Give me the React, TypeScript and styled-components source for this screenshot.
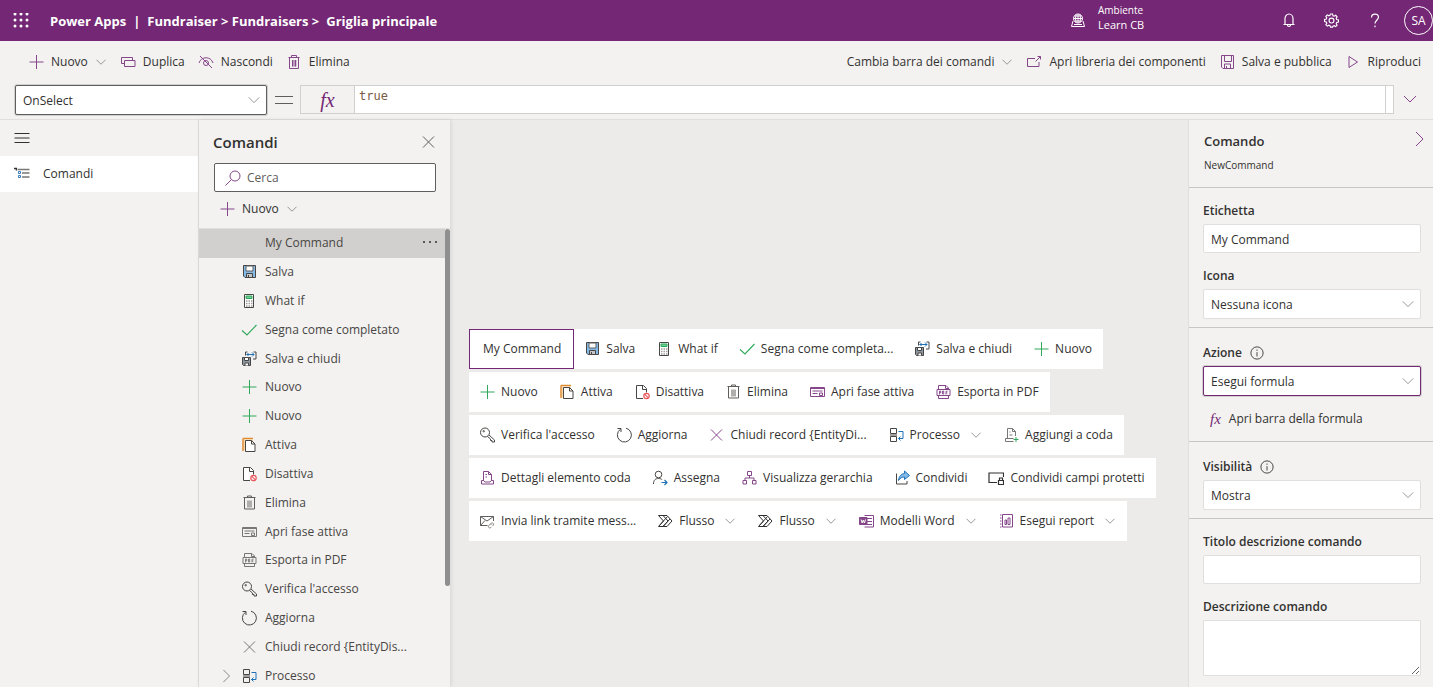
import React from "react";
import styled, { createGlobalStyle, css } from "styled-components";

const purple = "#742774";
const iconPurple = "#85478a";
const ink = "#323130";
const line = "#c8c6c4";
const font = '"Open Sans", "Noto Sans", sans-serif';

const Global = createGlobalStyle`
  *, *::before, *::after { box-sizing: border-box; }
  body { margin: 0; font-family: ${font}; font-size: 12px; line-height: 20px; color: ${ink}; background: #f3f2f1; }
  button, input, select, textarea { font: inherit; color: inherit; margin: 0; }
  svg { display: block; flex: none; }
`;

/* ---------- icons ---------- */

const Svg = ({ size = 16, children, ...rest }: React.SVGProps<SVGSVGElement> & { size?: number }) => (
  <svg width={size} height={size} viewBox="0 0 16 16" fill="none" stroke="currentColor" strokeWidth="1" aria-hidden="true" {...rest}>
    {children}
  </svg>
);

const icons = {
  plus: <path d="M8.500 1v14M1.500 8h14" />,
  plusGreen: <path d="M8.500 1v14M1.500 8h14" stroke="#2fa85a" />,
  duplicate: <path d="M4.500 9.500H1.500v-6h11v3M4.500 6.500h10.500v6H4.500z" />,
  hide: (
    <>
      <path d="M1 9c2-7 12-7 14 0" />
      <circle cx="8" cy="9" r="2.500" />
      <path d="M2 2l12 12" />
    </>
  ),
  trash: (
    <>
      <path d="M6 6h4.500v6.500H6z" fill="currentColor" stroke="none" opacity="0.5" />
      <path d="M2.500 3.500h11M5.500 3.500v-2h5v2M3.500 3.500v11h9v-11M6.500 6v6.500M9.500 6v6.500" />
    </>
  ),
  library: <path d="M9 4.500H1.500v8h11.500V8M9.500 7.500l5-5M11.500 2.500h3V5.500" />,
  savePlain: <path d="M2.500 1.500h12v13H4l-1.500-1.500zM5.500 1.500v6h7v-6M5.500 14.500v-4.500h6v4.500M7.500 12v2.500" />,
  play: <path d="M4 2.500l8.500 5.500L4 13.500z" />,
  chevDown: <path d="M2 5L8 11 14 5" />,
  chevRight: <path d="M5 1l7 7-7 7" />,
  menu: <path d="M0.500 3.500h15M0.500 8h15M0.500 12.500h15" />,
  tree: (
    <>
      <path d="M0 2.500h3M2.500 2.500v2" strokeWidth="1.500" />
      <path d="M4 3.500h11.500M8 7h7.500M8 11h7.500" stroke="#797775" strokeWidth="1.300" />
      <path d="M4.500 5.500h2v2h-2zM4.500 9.500h2v2h-2z" stroke="#3a7fc0" />
    </>
  ),
  close: <path d="M3 2.500l11 11M14 2.500l-11 11" />,
  search: (
    <>
      <circle cx="10" cy="6" r="5" />
      <path d="M6.500 9.500L0.500 15.500" />
    </>
  ),
  save: (
    <>
      <path d="M2.500 1.500h12v12H4l-1.500-1.500z" fill="#83bae8" stroke="#484644" />
      <path d="M5 2h7v5H5z" fill="#fff" stroke="#605e5c" />
      <path d="M5.500 9.500h6v4h-6z" fill="#c8c6c4" stroke="#484644" />
      <path d="M7.500 11v2.500" stroke="#484644" />
    </>
  ),
  calc: (
    <>
      <path d="M3.500 1.500h9v13h-9z" fill="#fff" stroke="#484644" />
      <path d="M5 3h6v2.500H5z" fill="#6fce96" stroke="#2fa85a" />
      <path d="M5 8h6.500M5 10.500h6.500M5 13h6.500" stroke="#a19f9d" strokeWidth="1.500" strokeDasharray="1.500 1" />
    </>
  ),
  check: <path d="M1 8.500l5 4.500L15.500 3" stroke="#2fa85a" strokeWidth="1.100" />,
  saveClose: (
    <>
      <path d="M1.500 6.500h8v8h-7l-1-1z" fill="#8d97a0" stroke="#484644" />
      <path d="M3.500 6.500h4v3h-4z" fill="#fff" stroke="#484644" />
      <path d="M4 14.500v-2.500h3.500v2.500" fill="#fff" stroke="#484644" />
      <path d="M4.500 4.500V1h2M12.500 1h2.500v7h-3" stroke="#484644" />
      <path d="M5.500 3.500h7.500M7.500 2l-1.500 1.500L7.500 5M11 1.500l2 2-2 2" stroke="#1f72b8" />
    </>
  ),
  activate: (
    <>
      <path d="M2 1.500h10M2 1.500v12.500" stroke="#e08a2e" strokeWidth="1.500" />
      <path d="M3 2.500h9V4H5v9.500H3z" fill="#fbd9a8" stroke="none" />
      <path d="M4.500 3.500h6l3.500 3.500v7.500H4.500z" fill="#fff" stroke="#484644" />
      <path d="M10.500 3.500V7H14" stroke="#484644" />
    </>
  ),
  deactivate: (
    <>
      <path d="M9 14.500H2.500v-13h7l3 3v4" fill="#fff" stroke="#484644" />
      <path d="M8.500 1.500v4h4" stroke="#484644" />
      <circle cx="12.500" cy="12" r="2.700" fill="#fff" stroke="#e8575b" strokeWidth="1.200" />
      <path d="M10.700 10.200l3.600 3.600" stroke="#e8575b" strokeWidth="1.200" />
    </>
  ),
  bin: (
    <>
      <path d="M6 5.500h5v7H6z" fill="#b0aeac" stroke="none" />
      <path d="M2.500 2.500h12M6.500 2.500v-1.500h4v1.500M3.500 2.500v11.500h10v-11.500" stroke="#605e5c" />
    </>
  ),
  stage: (
    <>
      <path d="M1.500 3.500h14v9h-14zM2 4.500h13" />
      <path d="M3.500 7h7M3.500 9.500h5M10.500 7h3M10.500 9h3v2.500h-3z" />
    </>
  ),
  pdf: (
    <>
      <path d="M3.500 5.500V1.500h7.500l2.500 2.500v1.500M10.500 1.500V4.500h3M3.500 11.500v3h10v-3M2 5.500h13v6H2z" />
      <path d="M4.500 10.500V7h1.200v2H4.500M7.500 7v3h1.200V7H7.500M12.500 7.200h-1.500v3.300M11 9h1.500" strokeWidth="0.900" />
    </>
  ),
  key: (
    <>
      <path d="M10 8l5.500 5v2h-2.500v-1.500h-1.500V12L8.500 9.500" stroke="#484644" />
      <circle cx="6" cy="5.500" r="4.500" stroke="#484644" />
      <circle cx="4.700" cy="4.200" r="0.700" stroke="#484644" />
    </>
  ),
  refresh: <path d="M10 1.200a7 7 0 1 1-5.500 1M1.500 1.500h3.500V5" stroke="#484644" />,
  process: (
    <>
      <path d="M2.500 1.500h6v5h-6zM2.500 9.500h6v5h-6z" stroke="#484644" />
      <path d="M2 8h7" stroke="#a19f9d" strokeWidth="2" />
      <path d="M10.500 4.500h4.500v7h-4.500M12.500 9.500l-2 2 2 2" stroke="#1f72b8" />
    </>
  ),
  queueAdd: (
    <>
      <path d="M4.500 11V1.500h5l3 3V9M9.500 1.500v3h3M6.500 5h1M6.500 8h3M2.500 11.500h8M2.500 14.500h8M2.500 11.500v3" stroke="#797775" />
      <path d="M13 10v5M10.500 12.500h5" stroke="#2fa85a" />
    </>
  ),
  queue: <path d="M4.500 11V1.500h5l3 3V11M9.500 1.500v3h3M6.500 4.500h1.500M6.500 7h1.500M2.500 10.500h2l1.500 1.500h5l1.500-1.500h2v3.500h-12z" />,
  assign: (
    <>
      <circle cx="6.500" cy="4.500" r="3.300" stroke="#484644" />
      <path d="M1.500 14c0-4 2-5.500 5-5.500 2 0 3 .5 3.500 1.200" stroke="#484644" />
      <path d="M9.500 12.500h5.500M12.500 10l2.500 2.500-2.500 2.500" stroke="#1f72b8" strokeWidth="1.200" />
    </>
  ),
  hierarchy: <path d="M6.500 1.500h4v4h-4zM2 10.500h3.500v3.500H2zM11.500 10.500h3.500v3.500h-3.500zM8.500 5.500V8M4 10.500V8h9v2.500" />,
  share: (
    <>
      <path d="M2.500 3.500v10.500h10.500V11" stroke="#484644" />
      <path d="M10.500 1l5 4.500-5 4V7C8 7 6 8 4.500 10.500 5 6.500 7 3.800 10.500 3.500z" fill="#83bae8" stroke="#1f72b8" />
    </>
  ),
  shareLock: (
    <>
      <path d="M9 12.500H1v-9.500h14.500V7" stroke="#323130" strokeWidth="1.200" />
      <path d="M10.500 10.500h5v4h-5zM11.500 10.500V8h3v2.500" stroke="#323130" strokeWidth="1.200" />
    </>
  ),
  mail: (
    <>
      <path d="M8.500 12.500H1.500v-9h13V8M1.500 3.500l6.500 4.500 6.500-4.500M1.500 12.500l4.500-5" stroke="#605e5c" />
      <path d="M11.500 11l1-1a1.500 1.500 0 0 1 2 2l-1 1M12.500 12l-1-1-2 1.800a1.500 1.500 0 0 0 2 2l1-1" stroke="#8a8886" />
    </>
  ),
  flow: (
    <path d="M1.500 2.500h8.500l5 5.500-5 5.500H1.500L6.500 8zM6 2.500L11 8 6 13.500M2 13L10.500 3.500M6 13.500l7-7.500" stroke="#323130" />
  ),
  word: (
    <>
      <path d="M6.500 2.500h9v11.500h-9M9 5.500h5M9 8.500h5M9 11.500h5" />
      <path d="M1.500 4.500h7.500v7h-7.500z" fill="currentColor" />
      <path d="M3 6.500l1.200 3.500 1.100-3L6.400 10 7.500 6.500" stroke="#fff" />
    </>
  ),
  report: (
    <path d="M4.500 1.500h10v12.500h-10zM2 2h1.500M2 5h1.500M2 8h1.500M2 11h1.500M2 14h1.500M7 7h1.500v4.500H7zM10 5h2v6.500h-2z" />
  ),
};

type IconName = keyof typeof icons;
const Icon = ({ name, size }: { name: IconName; size?: number }) => <Svg size={size}>{icons[name]}</Svg>;

/* ---------- shell ---------- */

const Shell = styled.div`
  height: 100vh;
  display: flex;
  flex-direction: column;
  overflow: hidden;
`;

const IconButton = styled.button<{ $w?: number; $h?: number }>`
  display: flex;
  align-items: center;
  justify-content: center;
  flex: none;
  width: ${(p) => p.$w ?? 16}px;
  height: ${(p) => p.$h ?? 16}px;
  padding: 0;
  border: 0;
  background: none;
  color: inherit;
`;

const Header = styled.header`
  flex: none;
  display: flex;
  align-items: center;
  height: 41px;
  padding-left: 13px;
  background: ${purple};
  color: #fff;
`;

const Crumbs = styled.nav`
  display: flex;
  gap: 7px;
  margin-left: 21px;
  font-size: 13px;
  font-weight: 700;
  white-space: nowrap;
`;

const Crumb = styled.a`
  color: inherit;
  text-decoration: none;
`;

const Environment = styled.div`
  display: flex;
  align-items: center;
  gap: 12px;
  width: 197px;
  margin-left: auto;
`;

const EnvText = styled.div`
  display: flex;
  flex-direction: column;
  height: 36px;
  font-size: 11px;
  line-height: 16px;
`;

const EnvCaption = styled.span`
  font-size: 10px;
  line-height: 14px;
`;

const Avatar = styled.button`
  width: 29px;
  height: 29px;
  margin-left: 8px;
  padding: 0;
  border: 1px solid #fff;
  border-radius: 50%;
  background: none;
  font-size: 12px;
`;

const Toolbar = styled.div`
  flex: none;
  display: flex;
  align-items: center;
  justify-content: space-between;
  height: 41px;
  padding: 0 12px 0 28px;
`;

const ToolGroup = styled.div`
  display: flex;
  align-items: center;
  gap: 13px;
`;

const TextButton = styled.button`
  display: flex;
  align-items: center;
  gap: 7px;
  padding: 0;
  border: 0;
  background: none;
  white-space: nowrap;

  svg { color: ${iconPurple}; }
  span + svg { color: #797775; }
`;

/* ---------- form parts ---------- */

const SelectBox = styled.div<{ $tone?: "dark" | "accent"; $w?: number }>`
  position: relative;
  width: ${(p) => (p.$w ? `${p.$w}px` : "auto")};
  height: 30px;
  border: 1px solid #e1dfdd;
  border-radius: 2px;
  background: #fff;
  ${(p) =>
    p.$tone &&
    css`
      border-color: ${p.$tone === "dark" ? "#605e5c" : purple};
      box-shadow: 0 0 0 1px #d2d0ce;
    `}

  svg {
    position: absolute;
    right: 5px;
    top: 7px;
    color: #8a8886;
    pointer-events: none;
  }
`;

const NativeSelect = styled.select`
  display: block;
  width: 100%;
  height: 100%;
  padding: 1px 24px 0 7px;
  border: 0;
  outline: 0;
  background: none;
  appearance: none;
`;

const Select = (props: { id: string; value: string; tone?: "dark" | "accent"; width?: number; label?: string }) => (
  <SelectBox $tone={props.tone} $w={props.width}>
    <NativeSelect id={props.id} aria-label={props.label} defaultValue={props.value}>
      <option>{props.value}</option>
    </NativeSelect>
    <Icon name="chevDown" size={14} />
  </SelectBox>
);

const TextInput = styled.input`
  display: block;
  width: 100%;
  height: 29px;
  padding: 1px 7px 0;
  border: 1px solid #e1dfdd;
  border-radius: 2px;
  background: #fff;
`;

const TextArea = styled.textarea`
  display: block;
  width: 100%;
  height: 56px;
  padding: 4px 7px;
  border: 1px solid #e1dfdd;
  border-radius: 2px;
  background: #fff;
  resize: vertical;
`;

/* ---------- formula bar ---------- */

const FormulaRow = styled.div`
  flex: none;
  display: flex;
  align-items: flex-start;
  height: 38px;
  padding: 3px 7px 0 15px;
  border-bottom: 1px solid #e1dfdd;
`;

const Equals = styled.span`
  width: 18px;
  height: 8px;
  margin: 11px 7px 0 8px;
  border: solid #605e5c;
  border-width: 1px 0;
`;

const FormulaBox = styled.div`
  display: flex;
  flex: 1;
  height: 29px;
  border: 1px solid #d2d0ce;
`;

const Fx = styled.span<{ $size: number }>`
  font-family: "Liberation Serif", serif;
  font-style: italic;
  font-size: ${(p) => p.$size}px;
  color: ${purple};
`;

const FxCell = styled.label`
  display: flex;
  align-items: center;
  justify-content: center;
  width: 54px;
  border-right: 1px solid #d2d0ce;
`;

const FormulaInput = styled.input`
  flex: 1;
  min-width: 0;
  padding: 0 4px 8px;
  border: 0;
  border-right: 1px solid #d2d0ce;
  background: #fff;
  font-family: "DejaVu Sans Mono", monospace;
  font-size: 12px;
  color: #7a5a44;
`;

const FormulaEnd = styled.span`
  width: 7px;
  background: #fff;
`;

/* ---------- left side ---------- */

const Body = styled.div`
  flex: 1;
  min-height: 0;
  display: flex;
`;

const Nav = styled.nav`
  flex: none;
  width: 199px;
  border-right: 1px solid #e1dfdd;
`;

const NavHead = styled.div`
  display: flex;
  align-items: center;
  height: 36px;
  padding-left: 14px;
`;

const NavItem = styled.a`
  display: flex;
  align-items: center;
  gap: 13px;
  height: 36px;
  padding-left: 14px;
  background: #fff;
  color: inherit;
  text-decoration: none;
`;

const Panel = styled.section`
  flex: none;
  display: flex;
  flex-direction: column;
  width: 251px;
  box-shadow: 1px 0 4px rgba(0, 0, 0, 0.1);
  z-index: 1;
`;

const PanelHead = styled.div`
  display: flex;
  align-items: center;
  justify-content: space-between;
  height: 43px;
  padding: 0 14px;
  button { color: #605e5c; }
`;

const PanelTitle = styled.h2`
  margin: 0;
  font-size: 15px;
  font-weight: 600;
`;

const SearchBox = styled.label`
  display: flex;
  align-items: center;
  gap: 6px;
  height: 29px;
  margin: 0 14px 0 15px;
  padding-left: 10px;
  border: 1px solid #605e5c;
  border-radius: 2px;
  background: #fff;
  color: ${iconPurple};
`;

const SearchInput = styled.input`
  flex: 1;
  min-width: 0;
  padding: 0;
  border: 0;
  outline: 0;
  background: none;
  &::placeholder { color: #605e5c; opacity: 1; }
`;

const PanelTools = styled.div`
  display: flex;
  align-items: center;
  height: 37px;
  padding: 0 0 2px 20px;
  border-bottom: 1px solid #e1dfdd;
`;

const ListArea = styled.div`
  flex: 1;
  min-height: 0;
  display: flex;
`;

/* the last row runs slightly past the fold */
const List = styled.ul`
  flex: 1;
  display: flex;
  flex-direction: column;
  margin: 0 0 -3px;
  padding: 0;
  list-style: none;
`;

const ListItem = styled.li<{ $on?: boolean }>`
  flex: 1 0 28px;
  display: flex;
  align-items: center;
  padding: 0 7px 0 20px;
  background: ${(p) => (p.$on ? "#d2d0ce" : "none")};
  color: #484644;
  svg { color: #797775; }
`;

const Slot = styled.span`
  display: flex;
  width: 22px;
`;

const ListLabel = styled.button`
  flex: 1;
  display: flex;
  align-items: center;
  gap: 8px;
  padding: 0;
  border: 0;
  background: none;
  text-align: left;
  white-space: nowrap;
`;

const IconSpace = styled.span`
  width: 16px;
`;

const Thumb = styled.div`
  flex: none;
  width: 5px;
  height: 78%;
  border-radius: 3px;
  background: #8f8f8f;
`;

/* ---------- canvas ---------- */

const Canvas = styled.main`
  flex: 1;
  min-width: 0;
  display: flex;
  flex-direction: column;
  align-items: flex-start;
  justify-content: center;
  gap: 3px;
  padding: 63px 0 0 19px;
  background: #edebe9;
`;

const CommandBar = styled.div`
  display: flex;
  height: 40px;
  background: #fff;
`;

const Command = styled.button<{ $on?: boolean }>`
  display: flex;
  align-items: center;
  gap: 6px;
  padding: 0 11px 0 10px;
  border: 0;
  background: none;
  white-space: nowrap;
  svg { color: ${iconPurple}; }
  span + svg { margin-left: 4px; color: #797775; }
  ${(p) =>
    p.$on &&
    css`
      padding: 0 12px 0 13px;
      border: 1px solid ${purple};
    `}
`;

/* ---------- properties ---------- */

const Properties = styled.aside`
  flex: none;
  width: 245px;
  border-left: 1px solid #e1dfdd;
`;

const PropHead = styled.div`
  display: flex;
  justify-content: space-between;
  height: 68px;
  padding: 11px 6px 0 15px;
  border-bottom: 1px solid ${line};
`;

const PropTitle = styled.h2`
  margin: 0 0 5px;
  font-size: 13px;
  font-weight: 600;
  line-height: 20px;
`;

const PropName = styled.div`
  font-size: 10px;
  line-height: 18px;
`;

const Section = styled.section<{ $roomy?: boolean }>`
  display: flex;
  flex-direction: column;
  gap: 13px;
  padding: ${(p) => (p.$roomy ? 15 : 13)}px 12px 8px 14px;
  border-bottom: 1px solid ${line};
  &:last-child { border-bottom: 0; }
`;

const LabelRow = styled.div`
  display: flex;
  align-items: center;
  gap: 8px;
  height: 20px;
  margin-bottom: 3px;
`;

const Label = styled.label`
  font-weight: 600;
`;

const FormulaLink = styled.button`
  display: flex;
  align-items: center;
  gap: 8px;
  margin-bottom: 4px;
  padding: 0 0 0 7px;
  border: 0;
  background: none;
`;

const InfoIcon = () => (
  <Svg size={14}>
    <circle cx="8" cy="8" r="7" />
    <path d="M8 7v5M8 4v1.500" />
  </Svg>
);

const Field = ({ id, label, info, children }: { id: string; label: string; info?: boolean; children: React.ReactNode }) => (
  <div>
    <LabelRow>
      <Label htmlFor={id}>{label}</Label>
      {info && <InfoIcon />}
    </LabelRow>
    {children}
  </div>
);

/* ---------- data ---------- */

type Cmd = { text: string; icon?: IconName; menu?: boolean; on?: boolean };

const listItems: Cmd[] = [
  { text: "My Command", on: true },
  { text: "Salva", icon: "save" },
  { text: "What if", icon: "calc" },
  { text: "Segna come completato", icon: "check" },
  { text: "Salva e chiudi", icon: "saveClose" },
  { text: "Nuovo", icon: "plusGreen" },
  { text: "Nuovo", icon: "plusGreen" },
  { text: "Attiva", icon: "activate" },
  { text: "Disattiva", icon: "deactivate" },
  { text: "Elimina", icon: "bin" },
  { text: "Apri fase attiva", icon: "stage" },
  { text: "Esporta in PDF", icon: "pdf" },
  { text: "Verifica l'accesso", icon: "key" },
  { text: "Aggiorna", icon: "refresh" },
  { text: "Chiudi record {EntityDis...", icon: "close" },
  { text: "Processo", icon: "process", menu: true },
];

const bars: Cmd[][] = [
  [
    { text: "My Command", on: true },
    { text: "Salva", icon: "save" },
    { text: "What if", icon: "calc" },
    { text: "Segna come completa...", icon: "check" },
    { text: "Salva e chiudi", icon: "saveClose" },
    { text: "Nuovo", icon: "plusGreen" },
  ],
  [
    { text: "Nuovo", icon: "plusGreen" },
    { text: "Attiva", icon: "activate" },
    { text: "Disattiva", icon: "deactivate" },
    { text: "Elimina", icon: "bin" },
    { text: "Apri fase attiva", icon: "stage" },
    { text: "Esporta in PDF", icon: "pdf" },
  ],
  [
    { text: "Verifica l'accesso", icon: "key" },
    { text: "Aggiorna", icon: "refresh" },
    { text: "Chiudi record {EntityDi...", icon: "close" },
    { text: "Processo", icon: "process", menu: true },
    { text: "Aggiungi a coda", icon: "queueAdd" },
  ],
  [
    { text: "Dettagli elemento coda", icon: "queue" },
    { text: "Assegna", icon: "assign" },
    { text: "Visualizza gerarchia", icon: "hierarchy" },
    { text: "Condividi", icon: "share" },
    { text: "Condividi campi protetti", icon: "shareLock" },
  ],
  [
    { text: "Invia link tramite mess...", icon: "mail" },
    { text: "Flusso", icon: "flow", menu: true },
    { text: "Flusso", icon: "flow", menu: true },
    { text: "Modelli Word", icon: "word", menu: true },
    { text: "Esegui report", icon: "report", menu: true },
  ],
];

const dots = [2, 8, 14];

export default function App() {
  return (
    <Shell>
      <Global />
      <Header>
        <IconButton aria-label="Avvio app">
          <Svg fill="#fff" stroke="none">
            {dots.map((y) => dots.map((x) => <circle key={`${x}-${y}`} cx={x} cy={y - 1} r="1.500" />))}
          </Svg>
        </IconButton>
        <Crumbs>
          <Crumb href="#">Power Apps</Crumb>
          <span>|</span>
          <Crumb href="#">{"Fundraiser > Fundraisers >"}</Crumb>
          <span>Griglia principale</span>
        </Crumbs>
        <Environment>
          <Svg>
            <circle cx="8" cy="5.500" r="4.500" />
            <path d="M3.500 5.500h9M4.500 3h7M4.500 8h7M8 1v9M6.300 1.500c-1 2.500-1 5.500 0 8M9.700 1.500c1 2.500 1 5.500 0 8M3 8l-1.500 5.500h13L13 8M4 11.500h8" />
          </Svg>
          <EnvText>
            <EnvCaption>Ambiente</EnvCaption>
            <span>Learn CB</span>
          </EnvText>
        </Environment>
        <IconButton $w={43} $h={40} aria-label="Notifiche">
          <Svg strokeWidth="1.200">
            <path d="M2.500 11.500h11M4 11.500V5.500a4 4.500 0 0 1 8 0v6M6.500 12c0 2 3 2 3 0" />
          </Svg>
        </IconButton>
        <IconButton $w={43} $h={40} aria-label="Impostazioni">
          <Svg size={15} strokeWidth="1.200">
            <path d="M6.900 1h2.200l.5 1.900 1.200.5 1.700-1 1.500 1.600-1 1.700.5 1.200 1.900.5v2.200l-1.900.5-.5 1.200 1 1.700-1.500 1.500-1.700-1-1.200.5L9.100 15H6.900l-.5-1.500-1.200-.5-1.700 1L2 12.500l1-1.700-.5-1.200L.6 9.100V6.900l1.900-.5L3 5.200 2 3.500 3.500 2l1.700 1 1.200-.5z" />
            <circle cx="8" cy="8" r="2.600" />
          </Svg>
        </IconButton>
        <IconButton $w={43} $h={40} aria-label="Guida">
          <Svg strokeWidth="1.200">
            <path d="M4.500 4.500c0-4.500 7-4.500 7-.5 0 3-3.500 3.500-3.500 6.500M8 12.500v1.800" />
          </Svg>
        </IconButton>
        <Avatar>SA</Avatar>
      </Header>

      <Toolbar>
        <ToolGroup>
          <TextButton><Icon name="plus" /><span>Nuovo</span><Icon name="chevDown" size={12} /></TextButton>
          <TextButton><Icon name="duplicate" /><span>Duplica</span></TextButton>
          <TextButton><Icon name="hide" /><span>Nascondi</span></TextButton>
          <TextButton><Icon name="trash" /><span>Elimina</span></TextButton>
        </ToolGroup>
        <ToolGroup>
          <TextButton><span>Cambia barra dei comandi</span><Icon name="chevDown" size={12} /></TextButton>
          <TextButton><Icon name="library" /><span>Apri libreria dei componenti</span></TextButton>
          <TextButton><Icon name="savePlain" /><span>Salva e pubblica</span></TextButton>
          <TextButton><Icon name="play" /><span>Riproduci</span></TextButton>
        </ToolGroup>
      </Toolbar>

      <FormulaRow>
        <Select id="property" label="Proprietà" value="OnSelect" tone="dark" width={252} />
        <Equals />
        <FormulaBox>
          <FxCell htmlFor="formula"><Fx $size={20}>fx</Fx></FxCell>
          <FormulaInput id="formula" defaultValue="true" />
          <FormulaEnd />
        </FormulaBox>
        <IconButton $w={32} $h={28} aria-label="Espandi barra della formula">
          <Svg stroke={iconPurple}>{icons.chevDown}</Svg>
        </IconButton>
      </FormulaRow>

      <Body>
        <Nav>
          <NavHead>
            <IconButton aria-label="Menu"><Icon name="menu" /></IconButton>
          </NavHead>
          <NavItem href="#"><Icon name="tree" /><span>Comandi</span></NavItem>
        </Nav>

        <Panel>
          <PanelHead>
            <PanelTitle>Comandi</PanelTitle>
            <IconButton aria-label="Chiudi"><Icon name="close" /></IconButton>
          </PanelHead>
          <SearchBox>
            <Icon name="search" />
            <SearchInput placeholder="Cerca" aria-label="Cerca" />
          </SearchBox>
          <PanelTools>
            <TextButton><Icon name="plus" /><span>Nuovo</span><Icon name="chevDown" size={12} /></TextButton>
          </PanelTools>
          <ListArea>
            <List>
              {listItems.map((it, i) => (
                <ListItem key={i} $on={it.on}>
                  <Slot>{it.menu && <Icon name="chevRight" size={14} />}</Slot>
                  <ListLabel>
                    {it.icon ? <Icon name={it.icon} /> : <IconSpace />}
                    <span>{it.text}</span>
                  </ListLabel>
                  {it.on && (
                    <IconButton aria-label="Altre opzioni">
                      <Svg fill={ink} stroke="none">
                        {dots.map((x) => <circle key={x} cx={x} cy="7" r="1" />)}
                      </Svg>
                    </IconButton>
                  )}
                </ListItem>
              ))}
            </List>
            <Thumb />
          </ListArea>
        </Panel>

        <Canvas>
          {bars.map((bar, i) => (
            <CommandBar key={i}>
              {bar.map((c, j) => (
                <Command key={j} $on={c.on}>
                  {c.icon && <Icon name={c.icon} />}
                  <span>{c.text}</span>
                  {c.menu && <Icon name="chevDown" size={12} />}
                </Command>
              ))}
            </CommandBar>
          ))}
        </Canvas>

        <Properties>
          <PropHead>
            <div>
              <PropTitle>Comando</PropTitle>
              <PropName>NewCommand</PropName>
            </div>
            <IconButton aria-label="Comprimi">
              <Svg stroke={iconPurple}>{icons.chevRight}</Svg>
            </IconButton>
          </PropHead>
          <Section>
            <Field id="label" label="Etichetta"><TextInput id="label" defaultValue="My Command" /></Field>
            <Field id="icon" label="Icona"><Select id="icon" value="Nessuna icona" /></Field>
          </Section>
          <Section $roomy>
            <Field id="action" label="Azione" info><Select id="action" value="Esegui formula" tone="accent" /></Field>
            <FormulaLink><Fx $size={15}>fx</Fx><span>Apri barra della formula</span></FormulaLink>
          </Section>
          <Section $roomy>
            <Field id="visibility" label="Visibilità" info><Select id="visibility" value="Mostra" /></Field>
          </Section>
          <Section>
            <Field id="tipTitle" label="Titolo descrizione comando"><TextInput id="tipTitle" /></Field>
            <Field id="tipText" label="Descrizione comando"><TextArea id="tipText" /></Field>
          </Section>
        </Properties>
      </Body>
    </Shell>
  );
}
